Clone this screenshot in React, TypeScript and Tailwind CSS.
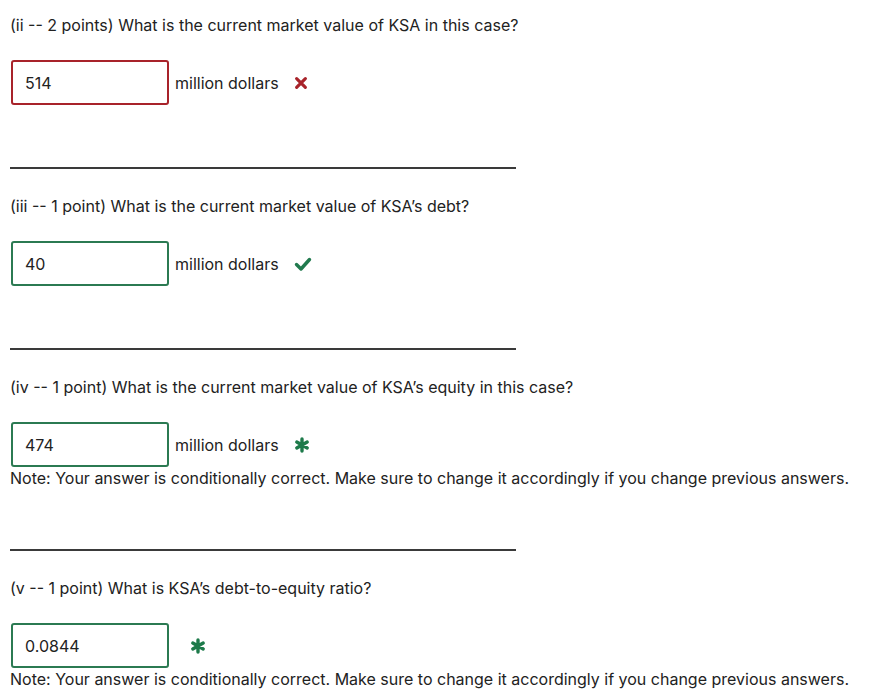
type Mark = 'wrong' | 'right' | 'cond';

const parts: { q: string; value: string; unit?: string; mark: Mark; note?: boolean }[] = [
    { q: '(ii -- 2 points) What is the current market value of KSA in this case?', value: '514', unit: 'million dollars', mark: 'wrong' },
    { q: '(iii -- 1 point) What is the current market value of KSA\u2019s debt?', value: '40', unit: 'million dollars', mark: 'right' },
    { q: '(iv -- 1 point) What is the current market value of KSA\u2019s equity in this case?', value: '474', unit: 'million dollars', mark: 'cond', note: true },
    { q: '(v -- 1 point) What is KSA\u2019s debt-to-equity ratio?', value: '0.0844', mark: 'cond', note: true },
];

function MarkIcon({ mark }: { mark: Mark }) {
    if (mark === 'wrong')
        return (
            <svg viewBox="0 0 16 16" className="w-[14px] h-[14px]">
                <path d="M3 3 L13 13 M13 3 L3 13" stroke="#a8232a" strokeWidth="3.6" strokeLinecap="round" />
            </svg>
        );
    if (mark === 'right')
        return (
            <svg viewBox="0 0 18 16" className="w-[18px] h-[16px]">
                <path d="M2.5 8.5 L7 13 L15.5 3.5" stroke="#217a4e" strokeWidth="3.4" strokeLinecap="round" strokeLinejoin="round" fill="none" />
            </svg>
        );
    return (
        <svg viewBox="0 0 16 16" className="w-[16px] h-[16px]">
            <path d="M8 2 L8 14 M2.8 5 L13.2 11 M13.2 5 L2.8 11" stroke="#1d7a4a" strokeWidth="3.4" strokeLinecap="round" />
        </svg>
    );
}

export default function App() {
    return (
        <div className="bg-white min-h-screen pl-[10px] pt-[13px] text-[#222] text-[16px] leading-[24px]" style={{ fontFamily: 'Inter, "Noto Sans", sans-serif' }}>
            {parts.map((p, idx) => (
                <div key={idx}>
                    {idx > 0 && <div className="w-[506px] h-[2px] bg-[#3a3a3a] mb-[25px]" />}
                    <div>{p.q}</div>
                    <div className="flex items-center mt-[23px]">
                        <div
                            className={`ml-px w-[158px] h-[45px] rounded-[3px] border-2 flex items-center pl-[12px] ${
                                p.mark === 'wrong' ? 'border-[#a8232a]' : 'border-[#2b7a52]'
                            }`}
                        >
                            {p.value}
                        </div>
                        {p.unit ? (
                            <>
                                <span className="ml-[6px]">{p.unit}</span>
                                <span className="ml-[15px] flex items-center"><MarkIcon mark={p.mark} /></span>
                            </>
                        ) : (
                            <span className="ml-[21px] flex items-center"><MarkIcon mark={p.mark} /></span>
                        )}
                    </div>
                    {p.note ? (
                        <>
                            <div className="-mt-[1px]">Note: Your answer is conditionally correct. Make sure to change it accordingly if you change previous answers.</div>
                            <div className="h-[59px]" />
                        </>
                    ) : (
                        <div className="h-[62px]" />
                    )}
                </div>
            ))}
        </div>
    );
}
